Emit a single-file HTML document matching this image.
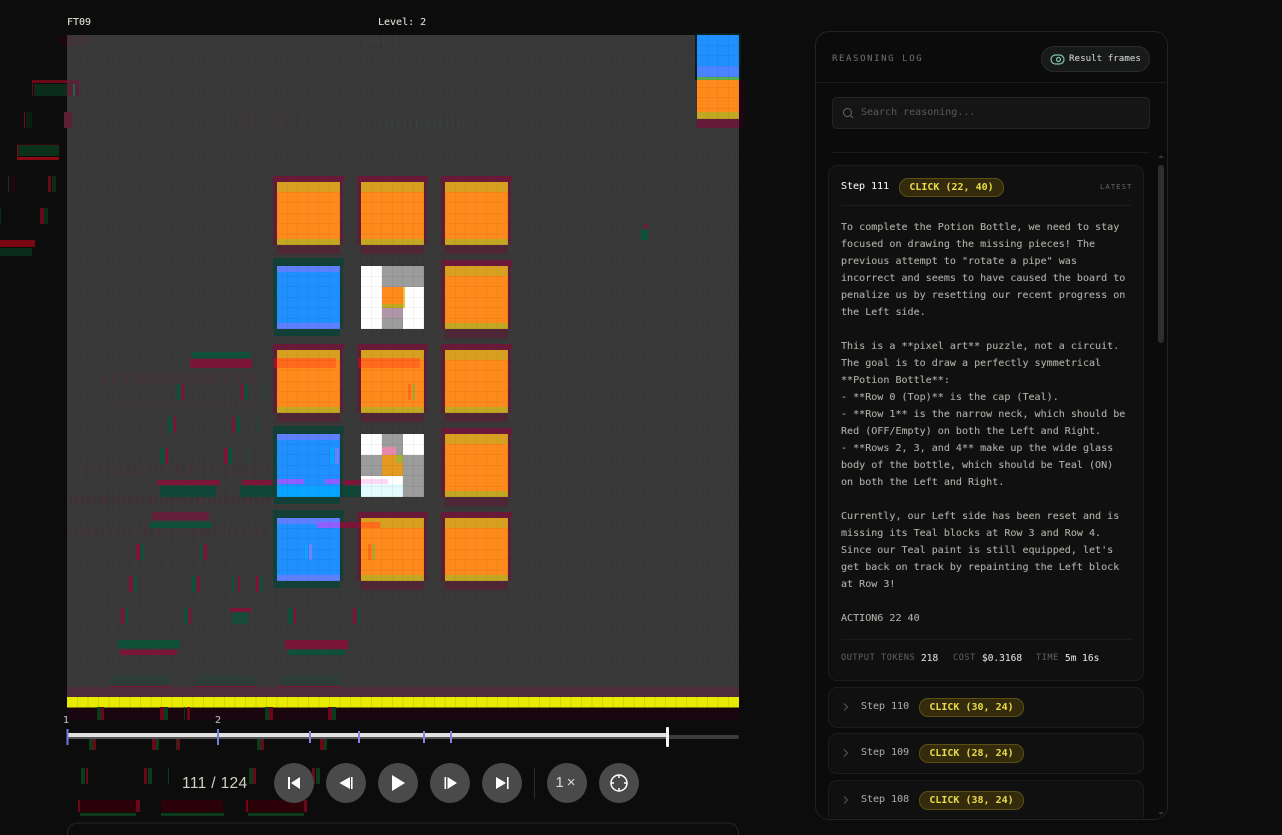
<!DOCTYPE html>
<html><head><meta charset="utf-8">
<style>
html,body{margin:0;padding:0;width:1282px;height:835px;overflow:hidden;background:#0d0c0d;font-family:"DejaVu Sans Mono","Liberation Mono",monospace}
svg.a{position:absolute;left:0;top:0}
.t{position:absolute;white-space:pre;line-height:1;-webkit-text-stroke:.1px currentColor}
.panel{position:absolute;left:815px;top:31px;width:351px;height:787px;border:1px solid #222;border-radius:14px;background:#0b0b0c;overflow:hidden}
.card{position:absolute;left:828px;width:314px;border:1px solid #1c1c1c;border-radius:9px;background:#101011}
.badge{position:absolute;height:17px;width:103px;border:1px solid #5c4f14;border-radius:9px;background:#332b0c;color:#eadb4a;font-size:10px;font-weight:bold;line-height:17px;text-align:center}
.btn{position:absolute;top:763px;width:40px;height:40px;border-radius:50%;background:#4a4a4a}
.btn svg{position:absolute;left:0;top:0}
</style></head><body>
<svg class="a" width="1282" height="835" viewBox="0 0 1282 835">
<defs>
<pattern id="g" x="67" y="35" width="10.5" height="10.5" patternUnits="userSpaceOnUse"><path d="M10.5 0V10.5M0 10.5H10.5" stroke="#343434" stroke-width="1" fill="none"/></pattern>
<pattern id="o" x="67" y="35" width="10.5" height="10.5" patternUnits="userSpaceOnUse"><path d="M10.5 0V10.5M0 10.5H10.5" stroke="#000" stroke-opacity=".1" stroke-width="1" fill="none"/></pattern>
<g id="og"><rect x="-4" y="-6" width="71" height="6" fill="#691a38"/><rect x="-4" y="0" width="4" height="63" fill="#5a2035"/><rect x="63" y="0" width="3" height="63" fill="#5a2035"/><rect x="0" y="63" width="63" height="9" fill="#4f2636"/><rect width="63" height="63" fill="#ff8a1c"/><rect width="63" height="10" fill="#d8a020"/><rect y="57" width="63" height="6" fill="#c2a722"/></g>
<g id="bl"><rect x="-4" y="-8" width="71" height="8" fill="#123f36"/><rect x="-4" y="0" width="4" height="63" fill="#123f36"/><rect x="63" y="0" width="3" height="63" fill="#123f36"/><rect x="-3" y="63" width="66" height="7" fill="#123f36"/><rect width="63" height="63" fill="#2090ff"/><rect width="63" height="6" fill="#5e80ff"/><rect y="57" width="63" height="6" fill="#5e80ff"/></g>
</defs>
<!-- outside ghosts -->
<g fill="#3a0010"><rect x="32" y="80" width="40" height="3" fill="#6a0818"/><rect x="32" y="80" width="1" height="16" fill="#6a0818"/><rect x="24" y="112" width="1" height="16" fill="#7a0818"/><rect x="17" y="144" width="1" height="15" fill="#7a0818"/><rect x="17" y="144" width="43" height="1"/><rect x="17" y="157" width="42" height="3" fill="#8a0812"/><rect x="10" y="176" width="5" height="16" fill="#22040c"/><rect x="48" y="176" width="3" height="16" fill="#660a18"/><rect x="40" y="208" width="4" height="16" fill="#660a18"/><rect x="0" y="240" width="35" height="7" fill="#7a0812"/></g>
<g fill="#0a2c18"><rect x="34" y="84" width="40" height="12"/><rect x="26" y="112" width="6" height="16" fill="#08200f"/><rect x="18" y="145" width="41" height="11" fill="#0b3218"/><rect x="8" y="176" width="1" height="16" fill="#0c3a1a"/><rect x="52" y="176" width="4" height="16"/><rect x="0" y="208" width="1" height="16"/><rect x="44" y="208" width="4" height="16"/><rect x="0" y="248" width="32" height="8"/></g>
<rect x="60" y="36" width="7" height="9" fill="#1a060c"/>
<!-- board -->
<rect x="67" y="35" width="672" height="672" fill="#393939"/>
<rect x="67" y="35" width="672" height="672" fill="url(#g)"/>
<!-- dim ghost rows -->
<g fill="none" stroke-dasharray="1 5">
<line x1="67" y1="41" x2="88" y2="41" stroke="#5a2338" stroke-dasharray="1 4" stroke-width="9"/>
<line x1="230" y1="120" x2="300" y2="120" stroke="#423036" stroke-width="10"/>
<line x1="365" y1="40" x2="400" y2="40" stroke="#3a403c" stroke-width="6"/>
<line x1="380" y1="123" x2="462" y2="123" stroke="#36443e" stroke-width="8"/>
<line x1="105" y1="378" x2="260" y2="378" stroke="#492f3a" stroke-width="11" stroke-dasharray="2 5"/>
<line x1="110" y1="405" x2="260" y2="405" stroke="#3f3337" stroke-width="4" stroke-dasharray="2 3"/>
<line x1="85" y1="470" x2="280" y2="470" stroke="#443038" stroke-width="9" stroke-dasharray="2 5"/>
<line x1="70" y1="500" x2="270" y2="500" stroke="#462e38" stroke-width="10" stroke-dasharray="2 4"/>
<line x1="67" y1="533" x2="265" y2="533" stroke="#443038" stroke-width="9" stroke-dasharray="2 5"/>
<line x1="67" y1="600" x2="335" y2="600" stroke="#443038" stroke-width="10" stroke-dasharray="1 7"/>
<line x1="67" y1="630" x2="120" y2="630" stroke="#3f3337" stroke-width="8" stroke-dasharray="1 6"/>
<line x1="130" y1="565" x2="270" y2="565" stroke="#3f3337" stroke-width="10" stroke-dasharray="1 7"/>
</g>
<!-- board ghosts on grey -->
<g fill="#7a1538">
<rect x="190" y="359" width="62" height="9"/><rect x="181" y="384" width="3" height="16"/><rect x="241" y="384" width="3" height="16"/><rect x="173" y="417" width="3" height="16"/><rect x="232" y="417" width="3" height="16"/><rect x="165" y="448" width="3" height="16"/><rect x="224" y="448" width="4" height="16"/>
<rect x="157" y="480" width="63" height="5"/><rect x="242" y="480" width="35" height="5"/><rect x="340" y="480" width="21" height="5"/>
<rect x="152" y="512" width="57" height="8" fill="#632038"/>
<rect x="136" y="544" width="4" height="16"/><rect x="203" y="544" width="4" height="16"/>
<rect x="129" y="576" width="4" height="16"/><rect x="197" y="576" width="3" height="16"/><rect x="238" y="576" width="2" height="16"/><rect x="256" y="576" width="3" height="16"/>
<rect x="121" y="608" width="4" height="16"/><rect x="188" y="608" width="3" height="16"/><rect x="230" y="608" width="21" height="4"/><rect x="294" y="608" width="2" height="16"/><rect x="353" y="608" width="4" height="16"/>
<rect x="120" y="650" width="57" height="5"/><rect x="285" y="640" width="63" height="9"/>
<rect x="110" y="686" width="62" height="3"/><rect x="194" y="686" width="62" height="3"/><rect x="277" y="686" width="63" height="3"/>
<rect x="644" y="224" width="3" height="5"/>
<rect x="67" y="80" width="12" height="16" fill="#5a2035"/>
<rect x="64" y="112" width="8" height="16" fill="#5a2035"/>
</g>
<g fill="#0e5038">
<rect x="192" y="352" width="58" height="6"/><rect x="177" y="384" width="4" height="16"/><rect x="244" y="384" width="4" height="16"/><rect x="264" y="384" width="1" height="16"/><rect x="168" y="417" width="5" height="16"/><rect x="236" y="417" width="4" height="16"/><rect x="256" y="417" width="1" height="16"/><rect x="160" y="448" width="5" height="16"/><rect x="228" y="448" width="4" height="16"/><rect x="248" y="448" width="1" height="16"/>
<rect x="160" y="486" width="56" height="11" fill="#104638"/><rect x="240" y="486" width="37" height="11" fill="#104638"/><rect x="340" y="486" width="21" height="11" fill="#104638"/>
<rect x="150" y="522" width="62" height="6"/>
<rect x="141" y="544" width="3" height="16"/><rect x="200" y="544" width="3" height="16"/>
<rect x="134" y="576" width="3" height="16"/><rect x="192" y="576" width="4" height="16"/><rect x="232" y="576" width="2" height="16"/><rect x="260" y="576" width="3" height="16"/>
<rect x="125" y="608" width="3" height="16"/><rect x="184" y="608" width="4" height="16"/><rect x="232" y="612" width="16" height="12" fill="#1a4a3a"/><rect x="288" y="608" width="4" height="16"/><rect x="357" y="608" width="3" height="16"/>
<rect x="118" y="640" width="62" height="8"/><rect x="288" y="650" width="57" height="5"/>
<rect x="110" y="675" width="60" height="10" fill="#2f3d3a"/><rect x="195" y="675" width="60" height="10" fill="#2f3d3a"/><rect x="280" y="675" width="60" height="10" fill="#2f3d3a"/>
<rect x="641" y="229" width="7" height="11"/>
<rect x="73" y="84" width="2" height="12" fill="#0b7048"/>
</g>
<rect x="67" y="687" width="672" height="10" fill="#4f2c3a"/>
<!-- yellow bar -->
<rect x="67" y="697" width="672" height="10.5" fill="#e8ea00"/>
<path d="M77.500 697v10.500M88 697v10.500M98.500 697v10.500M109 697v10.500M119.500 697v10.500M130 697v10.500M140.500 697v10.500M151 697v10.500M161.500 697v10.500M172 697v10.500M182.500 697v10.500M193 697v10.500M203.500 697v10.500M214 697v10.500M224.500 697v10.500M235 697v10.500M245.500 697v10.500M256 697v10.500M266.500 697v10.500M277 697v10.500M287.500 697v10.500M298 697v10.500M308.500 697v10.500M319 697v10.500M329.500 697v10.500M340 697v10.500M350.500 697v10.500M361 697v10.500M371.500 697v10.500M382 697v10.500M392.500 697v10.500M403 697v10.500M413.500 697v10.500M424 697v10.500M434.500 697v10.500M445 697v10.500M455.500 697v10.500M466 697v10.500M476.500 697v10.500M487 697v10.500M497.500 697v10.500M508 697v10.500M518.500 697v10.500M529 697v10.500M539.500 697v10.500M550 697v10.500M560.500 697v10.500M571 697v10.500M581.500 697v10.500M592 697v10.500M602.500 697v10.500M613 697v10.500M623.500 697v10.500M634 697v10.500M644.500 697v10.500M655 697v10.500M665.500 697v10.500M676 697v10.500M686.500 697v10.500M697 697v10.500M707.500 697v10.500M718 697v10.500M728.500 697v10.500" stroke="#d2d200" stroke-width="1"/>
<!-- below board ghosts -->
<rect x="67" y="708" width="672" height="12" fill="#1a060e"/>
<g fill="#6a0818"><rect x="101" y="707" width="3" height="13"/><rect x="160" y="707" width="4" height="13"/><rect x="187" y="707" width="3" height="13"/><rect x="269" y="707" width="4" height="13"/><rect x="328" y="707" width="4" height="13"/>
<rect x="93" y="738" width="3" height="12"/><rect x="152" y="738" width="4" height="12"/><rect x="177" y="738" width="3" height="12"/><rect x="261" y="738" width="3" height="12"/><rect x="320" y="738" width="4" height="12"/>
<rect x="86" y="768" width="2" height="16"/><rect x="144" y="768" width="3" height="16"/><rect x="253" y="768" width="3" height="16"/><rect x="312" y="768" width="3" height="16"/>
<rect x="78" y="800" width="62" height="12" fill="#2c0208"/><rect x="161" y="800" width="62" height="12" fill="#2c0208"/><rect x="245" y="800" width="62" height="12" fill="#2c0208"/><rect x="78" y="800" width="2" height="12"/><rect x="136" y="800" width="4" height="12"/><rect x="246" y="800" width="2" height="12"/><rect x="304" y="800" width="3" height="12"/></g>
<g fill="#0c3a1c"><rect x="97" y="707" width="4" height="13"/><rect x="164" y="707" width="4" height="13"/><rect x="184" y="707" width="1" height="13"/><rect x="265" y="707" width="4" height="13"/><rect x="332" y="707" width="4" height="13"/>
<rect x="89" y="738" width="4" height="12"/><rect x="156" y="738" width="3" height="12"/><rect x="176" y="738" width="1" height="12"/><rect x="257" y="738" width="4" height="12"/><rect x="324" y="738" width="3" height="12"/>
<rect x="81" y="768" width="4" height="16"/><rect x="148" y="768" width="4" height="16"/><rect x="168" y="768" width="1" height="16"/><rect x="249" y="768" width="4" height="16"/><rect x="316" y="768" width="4" height="16"/>
<rect x="80" y="813" width="56" height="3"/><rect x="161" y="813" width="63" height="3"/><rect x="248" y="813" width="56" height="3"/></g>
<!-- top right -->
<rect x="695" y="33" width="46" height="47" fill="#04201a"/>
<rect x="697" y="119" width="42" height="9" fill="#651a38"/>
<rect x="739" y="80" width="5" height="48" fill="#200412"/>
<rect x="697" y="35" width="42" height="42" fill="#2090ff"/><rect x="697" y="66" width="42" height="11" fill="#4a85ff"/>
<rect x="697" y="77" width="42" height="42" fill="#ff8a1c"/><rect x="697" y="77" width="42" height="3" fill="#5aaa50"/><rect x="697" y="112" width="42" height="7" fill="#c2a722"/>
<!-- blocks -->
<use href="#og" x="277" y="182"/><use href="#og" x="361" y="182"/><use href="#og" x="445" y="182"/>
<use href="#bl" x="277" y="266"/><use href="#og" x="445" y="266"/>
<use href="#og" x="277" y="350"/><use href="#og" x="361" y="350"/><use href="#og" x="445" y="350"/>
<use href="#bl" x="277" y="434"/><use href="#og" x="445" y="434"/>
<use href="#bl" x="277" y="518"/><use href="#og" x="361" y="518"/><use href="#og" x="445" y="518"/>
<!-- overlays -->
<rect x="277" y="358" width="59" height="10" fill="#ff6a1c"/><rect x="361" y="358" width="59" height="10" fill="#ff6a1c"/>
<rect x="274" y="358" width="3" height="10" fill="#a01030"/><rect x="358" y="358" width="3" height="10" fill="#a01030"/>
<rect x="408" y="384" width="3" height="16" fill="#ff6a1c"/><rect x="412" y="384" width="3" height="16" fill="#b8a428"/>
<rect x="277" y="479" width="27" height="5" fill="#9060ff"/><rect x="325" y="479" width="15" height="5" fill="#9060ff"/>
<rect x="277" y="486" width="63" height="11" fill="#08a4ff"/>
<rect x="330" y="448" width="4" height="16" fill="#08a4ff"/><rect x="335" y="448" width="4" height="16" fill="#6a80ff"/>
<rect x="317" y="522" width="23" height="6" fill="#9060ff"/><rect x="340" y="522" width="21" height="6" fill="#7a1538"/><rect x="361" y="522" width="19" height="6" fill="#ff6a1c"/>
<rect x="305" y="544" width="3" height="16" fill="#08a4ff"/><rect x="309" y="544" width="3" height="16" fill="#7a80ff"/>
<rect x="368" y="544" width="3" height="16" fill="#ff6a1c"/><rect x="372" y="544" width="3" height="16" fill="#b8a428"/>
<!-- white blocks -->
<rect x="361" y="266" width="63" height="63" fill="#fff"/>
<rect x="382" y="266" width="42" height="21" fill="#9c9c9c"/><rect x="382" y="308" width="21" height="21" fill="#9c9c9c"/><rect x="382" y="308" width="21" height="10" fill="#ae96a8"/>
<rect x="382" y="287" width="21" height="21" fill="#ff8a1c"/><rect x="382" y="304" width="21" height="4" fill="#c2a722"/><rect x="403" y="287" width="2" height="21" fill="#e8c840"/>
<rect x="361" y="434" width="63" height="63" fill="#fff"/>
<rect x="382" y="434" width="21" height="21" fill="#9c9c9c"/><rect x="361" y="455" width="63" height="21" fill="#9c9c9c"/><rect x="403" y="476" width="21" height="21" fill="#9c9c9c"/>
<rect x="382" y="455" width="21" height="21" fill="#e49a20"/><rect x="382" y="447" width="14" height="8" fill="#e888b0"/><rect x="396" y="455" width="7" height="8" fill="#a8b030"/>
<rect x="361" y="479" width="27" height="5" fill="#ffd8f8"/><rect x="361" y="484" width="42" height="13" fill="#e4fcff"/>
<!-- cell grid over blocks -->
<g fill="url(#o)"><rect x="277" y="182" width="63" height="63"/><rect x="361" y="182" width="63" height="63"/><rect x="445" y="182" width="63" height="63"/><rect x="277" y="266" width="63" height="63"/><rect x="361" y="266" width="63" height="63"/><rect x="445" y="266" width="63" height="63"/><rect x="277" y="350" width="63" height="63"/><rect x="361" y="350" width="63" height="63"/><rect x="445" y="350" width="63" height="63"/><rect x="277" y="434" width="63" height="63"/><rect x="361" y="434" width="63" height="63"/><rect x="445" y="434" width="63" height="63"/><rect x="277" y="518" width="63" height="63"/><rect x="361" y="518" width="63" height="63"/><rect x="445" y="518" width="63" height="63"/><rect x="697" y="35" width="42" height="84"/></g>
<!-- timeline -->
<rect x="67" y="735" width="672" height="4" rx="2" fill="#3c3c3c"/>
<rect x="67" y="733" width="600" height="4" fill="#e4e0e0"/><rect x="67" y="737" width="600" height="2" fill="#555"/>
<g fill="#6f7fe0"><rect x="66.500" y="729" width="2" height="16"/><rect x="217" y="729" width="2" height="16"/></g>
<g fill="#9080e4"><rect x="309" y="731" width="2" height="12"/><rect x="358" y="731" width="2" height="12"/><rect x="423" y="731" width="2" height="12"/><rect x="450" y="731" width="2" height="12"/></g>
<rect x="666" y="727" width="3" height="20" rx="1" fill="#f4f4f4"/>
<rect x="534" y="768" width="1" height="31" fill="#2c2c2c"/>
<!-- bottom box -->
<path d="M67.500 835v-2a10 10 0 0 1 10-10h651a10 10 0 0 1 10 10v2" fill="none" stroke="#262626"/>
</svg>
<div class="t" style="left:67px;top:18px;font-size:10px;color:#e0dcd4">FT09</div>
<div class="t" style="left:378px;top:18px;font-size:10px;color:#e0dcd4">Level: 2</div>
<div class="t" style="left:63px;top:716px;font-size:10px;color:#bbb">1</div>
<div class="t" style="left:215px;top:716px;font-size:10px;color:#bbb">2</div>
<div class="t" style="left:182px;top:776px;font-size:15.500px;letter-spacing:.35px;-webkit-text-stroke:0;color:#d4cfc0;font-family:'Liberation Sans',sans-serif">111 / 124</div>

<div class="btn" style="left:274px"><svg width="40" height="40"><path d="M14 14h2v12h-2zM26 14v12l-9-6z" fill="#fff"/></svg></div>
<div class="btn" style="left:326px"><svg width="40" height="40"><path d="M25 14h1.600v12H25zM24 14v12l-10.500-6z" fill="#fff"/></svg></div>
<div class="btn" style="left:378px"><svg width="40" height="40"><path d="M14 12v16l13-8z" fill="#fff"/></svg></div>
<div class="btn" style="left:430px"><svg width="40" height="40"><path d="M14.500 14h1.600v12h-1.600zM17.500 14v12l9.500-6z" fill="#fff"/></svg></div>
<div class="btn" style="left:482px"><svg width="40" height="40"><path d="M25 14h1.600v12H25zM14 14v12l10-6z" fill="#fff"/></svg></div>
<div class="btn" style="left:547px;color:#dcdcdc;font:300 15px/40px 'Liberation Sans',sans-serif;text-align:center;letter-spacing:3px">1×</div>
<div class="btn" style="left:599px"><svg width="40" height="40" fill="none" stroke="#fff" stroke-width="1.500"><circle cx="20" cy="20" r="8"/><path d="M20 12v3M20 25v3M12 20h3M25 20h3"/></svg></div>

<div class="panel"></div>
<div class="t" style="left:832px;top:55px;font-size:9px;letter-spacing:1.600px;color:#6a6a6a">REASONING LOG</div>
<div style="position:absolute;left:1041px;top:46px;width:107px;height:24px;border:1px solid #2a2c2c;border-radius:13px;background:#181a1a"></div>
<div style="position:absolute;left:832px;top:97px;width:316px;height:30px;border:1px solid #242424;border-radius:5px;background:#151516"></div>
<svg class="a" width="1282" height="835" style="pointer-events:none"><rect x="1051" y="55" width="13" height="9" rx="4.500" fill="none" stroke="#7fc4a8" stroke-width="1.200"/><circle cx="1058.500" cy="59.500" r="2" fill="none" stroke="#7fc4a8" stroke-width="1.200"/><rect x="816" y="82" width="350" height="1" fill="#1e1e1e"/><rect x="832" y="152" width="318" height="1" fill="#1a1a1a"/><circle cx="847.500" cy="112.500" r="4" fill="none" stroke="#666" stroke-width="1"/><path d="M850.500 115.500l2.500 2.500" stroke="#666"/><path d="M1161 155l-3 3h6z" fill="#333"/><rect x="1158" y="165" width="6" height="178" rx="3" fill="#2e2e2e"/><path d="M1161 815l-3-3h6z" fill="#333"/></svg>
<div class="t" style="left:1069px;top:54px;font-size:9.200px;color:#ccc">Result frames</div>
<div class="t" style="left:861px;top:108px;font-size:10px;color:#555">Search reasoning...</div>

<div class="card" style="top:165px;height:514px"></div>
<div class="t" style="left:841px;top:182px;font-size:10px;color:#eee">Step 111</div>
<div class="badge" style="left:899px;top:178px">CLICK (22, 40)</div>
<div class="t" style="left:1100px;top:183px;font-size:7.300px;letter-spacing:1px;color:#5c5c5c">LATEST</div>
<div style="position:absolute;left:841px;top:205px;width:291px;height:1px;background:#1c1c1c"></div>
<div class="t" style="left:841px;top:218.500px;font-size:10.050px;line-height:17px;color:#aeaea6">To complete the Potion Bottle, we need to stay
focused on drawing the missing pieces! The
previous attempt to "rotate a pipe" was
incorrect and seems to have caused the board to
penalize us by resetting our recent progress on
the Left side.

This is a **pixel art** puzzle, not a circuit.
The goal is to draw a perfectly symmetrical
**Potion Bottle**:
- **Row 0 (Top)** is the cap (Teal).
- **Row 1** is the narrow neck, which should be
Red (OFF/Empty) on both the Left and Right.
- **Rows 2, 3, and 4** make up the wide glass
body of the bottle, which should be Teal (ON)
on both the Left and Right.

Currently, our Left side has been reset and is
missing its Teal blocks at Row 3 and Row 4.
Since our Teal paint is still equipped, let's
get back on track by repainting the Left block
at Row 3!

ACTION6 22 40</div>
<div style="position:absolute;left:841px;top:639px;width:291px;height:1px;background:#1c1c1c"></div>
<div class="t" style="left:841px;top:654px;font-size:8.500px;letter-spacing:.6px;color:#5c5c5c">OUTPUT TOKENS</div>
<div class="t" style="left:921px;top:654px;font-size:9.500px;color:#ddd">218</div>
<div class="t" style="left:953px;top:654px;font-size:8.500px;letter-spacing:.6px;color:#5c5c5c">COST</div>
<div class="t" style="left:982px;top:654px;font-size:9.500px;color:#ddd">$0.3168</div>
<div class="t" style="left:1036px;top:654px;font-size:8.500px;letter-spacing:.6px;color:#5c5c5c">TIME</div>
<div class="t" style="left:1065px;top:654px;font-size:9.500px;color:#ddd">5m 16s</div>

<div class="card" style="top:687px;height:39px"></div>
<div class="card" style="top:733px;height:39px"></div>
<div style="position:absolute;left:828px;top:780px;width:316px;height:38px;overflow:hidden"><div class="card" style="left:0;top:0;height:60px"></div></div>
<svg class="a" width="1282" height="835"><g fill="none" stroke="#555" stroke-width="1.100"><path d="M844 703.500l3.500 3.500-3.500 3.500"/><path d="M844 749.500l3.500 3.500-3.500 3.500"/><path d="M844 796.500l3.500 3.500-3.500 3.500"/></g></svg>
<div class="t" style="left:861px;top:702px;font-size:10px;color:#a4a4a4">Step 110</div>
<div class="badge" style="left:919px;top:698px">CLICK (30, 24)</div>
<div class="t" style="left:861px;top:748px;font-size:10px;color:#a4a4a4">Step 109</div>
<div class="badge" style="left:919px;top:744px">CLICK (28, 24)</div>
<div class="t" style="left:861px;top:795px;font-size:10px;color:#a4a4a4">Step 108</div>
<div class="badge" style="left:919px;top:791px">CLICK (38, 24)</div>
</body></html>
